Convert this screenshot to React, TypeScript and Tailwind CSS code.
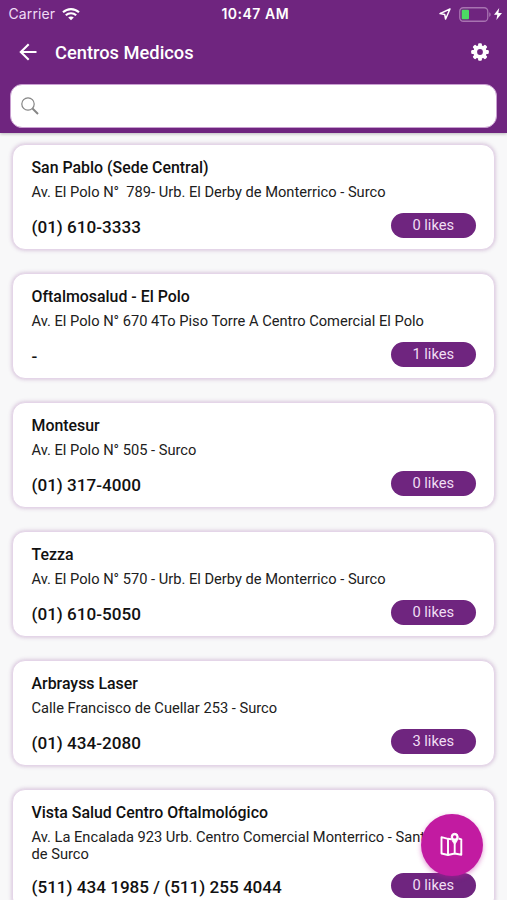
type Center = {
  name: string;
  address: string;
  phone: string;
  likes: number;
};

const centers: Center[] = [
  { name: "San Pablo (Sede Central)", address: "Av. El Polo N°  789- Urb. El Derby de Monterrico - Surco", phone: "(01) 610-3333", likes: 0 },
  { name: "Oftalmosalud - El Polo", address: "Av. El Polo N° 670 4To Piso Torre A Centro Comercial El Polo", phone: "-", likes: 1 },
  { name: "Montesur", address: "Av. El Polo N° 505 - Surco", phone: "(01) 317-4000", likes: 0 },
  { name: "Tezza", address: "Av. El Polo N° 570 - Urb. El Derby de Monterrico - Surco", phone: "(01) 610-5050", likes: 0 },
  { name: "Arbrayss Laser", address: "Calle Francisco de Cuellar 253 - Surco", phone: "(01) 434-2080", likes: 3 },
  { name: "Vista Salud Centro Oftalmológico", address: "Av. La Encalada 923 Urb. Centro Comercial Monterrico - Santiago\nde Surco", phone: "(511) 434 1985 / (511) 255 4044", likes: 0 },
];

function WifiIcon() {
  return (
    <svg className="ml-[7px] h-[13px] w-[18px]" viewBox="0 0 18 13" fill="none" stroke="#fff" strokeWidth="2.1">
      <path d="M1 4.300C5.500 0 12.500 0 17 4.300" />
      <path d="M3.800 7.300C6.700 4.500 11.300 4.500 14.200 7.300" />
      <path d="M9 12.300 6.200 9.600C7.800 8.100 10.200 8.100 11.800 9.600Z" fill="#fff" stroke="none" />
    </svg>
  );
}

function StatusBar() {
  return (
    <div className="grid h-[27px] grid-cols-[1fr_auto_1fr] items-center pr-[5px] pl-[8.500px] font-['Inter','Liberation_Sans',sans-serif] text-white">
      <div className="flex items-center">
        <span className="text-[14px] leading-7 tracking-[0.1px] text-[#f0dcf5]">Carrier</span>
        <WifiIcon />
      </div>
      <span className="text-[14px] leading-7 font-semibold tracking-[0.500px]">10:47 AM</span>
      <div className="flex items-center justify-end">
        <svg className="mr-[8px] h-3 w-3" viewBox="0 0 12 12" fill="none" stroke="#fff" strokeWidth="1.5" strokeLinejoin="round">
          <path d="M11 1 1 5.600 5.700 6.400 6.600 11Z" />
        </svg>
        <svg className="h-[15px] w-[32px]" viewBox="0 0 32 15">
          <rect x=".75" y=".75" width="28" height="13.500" rx="3.500" fill="none" stroke="#a873b1" strokeWidth="1.300" />
          <rect x="2.700" y="2.700" width="7.300" height="9.600" rx="1" fill="#4cd964" />
          <path d="M30.200 5.200C32.200 6 32.200 9 30.200 9.800Z" fill="#a873b1" />
        </svg>
        <svg className="ml-[3px] h-3 w-2" viewBox="0 0 8 12" fill="#fff">
          <path d="M5.200 0 0 6.800H3.300L2.400 12 8 4.900H4.400Z" />
        </svg>
      </div>
    </div>
  );
}

function Header() {
  return (
    <header className="relative z-10 h-[132.500px] shrink-0 bg-[#6f257f] shadow-[0_1px_3px_rgba(0,0,0,0.25)]">
      <StatusBar />
      <div className="flex h-[50px] items-center pr-[18px] pl-[19px] text-white">
        <svg className="h-[18px] w-[18px]" viewBox="0 0 18 18" fill="none" stroke="#fff" strokeWidth="2.1">
          <path d="M9.700 1.200 1.800 9 9.700 16.800M1.800 9H17.500" />
        </svg>
        <h1 className="mt-[2px] ml-[18px] text-[18.300px] leading-6 font-medium">Centros Medicos</h1>
        <svg className="ml-auto h-[18px] w-[18px]" viewBox="0 0 18 18">
          <g fill="#fff">
            <circle cx="9" cy="9" r="6.700" />
            {[0, 45, 90, 135].map((angle) => (
              <rect key={angle} x="7.100" y=".2" width="3.800" height="17.600" rx="1.200" transform={`rotate(${angle} 9 9)`} />
            ))}
          </g>
          <circle cx="9" cy="9" r="2.900" fill="#6f257f" />
        </svg>
      </div>
      <label className="mx-[10px] mt-[6.500px] flex h-[44.500px] items-center rounded-[12px] border border-[#c99fd1] bg-white pl-[9.500px]">
        <svg className="h-[18px] w-[18px]" viewBox="0 0 18 18" fill="none" stroke="#858585">
          <circle cx="7" cy="7" r="6.200" strokeWidth="1.200" />
          <path d="M11.500 11.500 17 17" strokeWidth="1.900" />
        </svg>
        <input aria-label="Buscar" className="min-w-0 flex-1 bg-transparent px-2 outline-none" />
      </label>
    </header>
  );
}

function CenterCard({ center }: { center: Center }) {
  return (
    <article className="shrink-0 rounded-[13px] border border-[#e4d5e8] bg-white pt-[13px] pr-[18px] pb-[11.500px] pl-[18.500px] shadow-[0_0_4px_rgba(111,37,127,0.3)]">
      <h2 className="text-[15.900px] leading-[20px] font-medium">{center.name}</h2>
      <p className="mt-[6px] min-h-[18.500px] text-[14.660px] leading-[17px] whitespace-pre text-[#202020]">{center.address}</p>
      <div className="mt-[10px] flex items-start justify-between">
        <span className="mt-[3px] text-[17.100px] leading-[22px] font-medium">{center.phone}</span>
        <span className="flex h-[25px] w-[85.500px] items-center justify-center rounded-full bg-[#6f257f] text-[14.700px] text-[#f1dff4]">
          {center.likes} likes
        </span>
      </div>
    </article>
  );
}

function MapIcon() {
  return (
    <svg className="h-[25px] w-[23px]" viewBox="0 0 23 25" fill="none" stroke="#fff" strokeWidth="1.900" strokeLinejoin="round">
      <path d="M11.500 7.300 8 6.800 1.500 5.200V21.500L8 23 14.700 21.500 21.300 22.800V7.300L18.500 6.500M8 6.800V23M14.700 12V21.500" />
      <path d="M14.700 12.500C12.500 9.300 11.200 7.300 11.200 4.800A3.500 3.500 0 0 1 18.200 4.800C18.200 7.300 16.900 9.300 14.700 12.500Z" fill="#fff" stroke="#fff" strokeWidth="1" />
      <circle cx="14.700" cy="4.900" r="1.700" fill="#c21ba1" stroke="none" />
    </svg>
  );
}

export default function App() {
  return (
    <div className="relative flex h-[900px] w-full flex-col overflow-hidden bg-[#f8f8f9] font-['Roboto','Liberation_Sans',sans-serif] text-[#111]">
      <Header />
      <main className="flex flex-col gap-[23px] px-[12px] pt-[11.500px]">
        {centers.map((center) => (
          <CenterCard key={center.name} center={center} />
        ))}
      </main>
      <button
        aria-label="Mapa"
        className="absolute top-[814px] left-[421px] z-20 flex h-[61.500px] w-[61.500px] items-center justify-center rounded-full bg-[#c21ba1] shadow-[0_2px_5px_rgba(194,27,161,0.45)]"
      >
        <MapIcon />
      </button>
    </div>
  );
}
